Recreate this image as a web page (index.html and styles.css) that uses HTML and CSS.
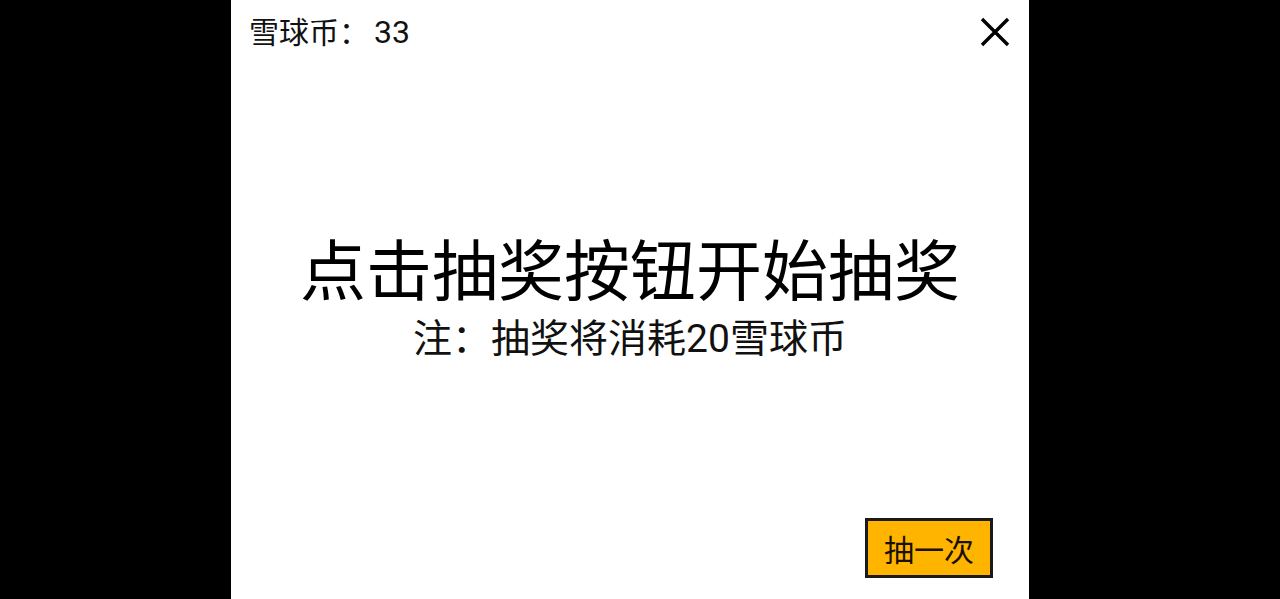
FILE: index.html
```html
<!DOCTYPE html>
<html lang="zh">
<head>
<meta charset="utf-8">
<link rel="stylesheet" href="styles.css">
</head>
<body>
<div class="panel">
  <div class="header">
    <span class="coins">雪球币：<span class="num">33</span></span>
    <svg class="close" width="32" height="32" viewBox="0 0 32 32">
      <path d="M3 3 L29 29 M29 3 L3 29" stroke="#000" stroke-width="3.4" stroke-linecap="butt" fill="none"/>
    </svg>
  </div>
  <div class="main">
    <div class="title">点击抽奖按钮开始抽奖</div>
    <div class="note">注：抽奖将消耗20雪球币</div>
  </div>
  <div class="footer">
    <button class="draw">抽一次</button>
  </div>
</div>
</body>
</html>
```
FILE: styles.css
```css
html, body {
  margin: 0;
  padding: 0;
  background: #000;
  height: 100%;
}
body {
  font-family: Roboto, "Noto Sans CJK SC", sans-serif;
  color: #000;
}
.panel {
  margin-left: 231px;
  width: 798px;
  height: 599px;
  background: #fff;
  display: flex;
  flex-direction: column;
}
.header {
  height: 64px;
  display: flex;
  align-items: center;
  justify-content: space-between;
  padding: 0 18px 0 18px;
}
.coins {
  font-size: 30px;
  line-height: 40px;
  color: #111;
}
.num {
  font-size: 32px;
  margin-left: 5px;
}
.close {
  display: block;
}
.main {
  display: flex;
  flex-direction: column;
  align-items: center;
  margin-top: 169px;
}
.title {
  font-size: 66px;
  line-height: 80px;
}
.note {
  font-size: 39px;
  line-height: 44px;
  margin-top: 4px;
  color: #111;
}
.footer {
  margin-top: auto;
  display: flex;
  justify-content: flex-end;
  padding: 0 36px 21px 0;
}
.draw {
  width: 128px;
  height: 60px;
  background: #FFB400;
  border: 3px solid #1a1a1a;
  font-family: "Noto Sans CJK SC", sans-serif;
  font-size: 30px;
  color: #1a1000;
  padding: 0;
  display: flex;
  align-items: center;
  justify-content: center;
}
```
